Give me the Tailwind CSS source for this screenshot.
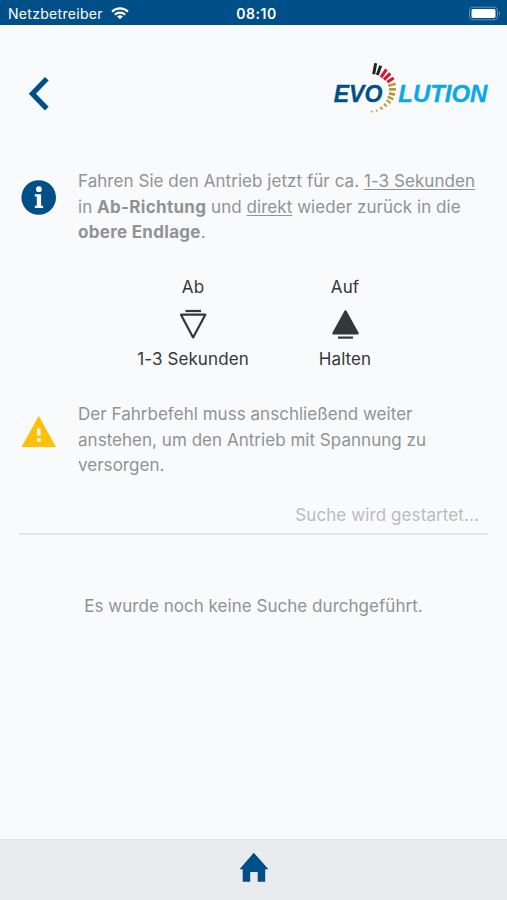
<!DOCTYPE html>
<html lang="de">

<head>
    <meta charset="UTF-8">
    <meta name="viewport" content="width=device-width, initial-scale=1">
    <title>Evolution</title>
    <script src="https://cdn.jsdelivr.net/npm/@tailwindcss/browser@4"></script>
</head>

<body class="bg-[#f9fafc] font-['Inter','Liberation_Sans',sans-serif] text-[#8f9396] w-[507px] h-[900px] flex flex-col overflow-hidden">
    <!-- Status bar -->
    <div class="h-[25px] shrink-0 bg-[#004f88] text-white grid grid-cols-3 items-center pt-[2px]">
        <div class="flex items-center pl-2">
            <span class="text-[14px] tracking-[0.3px] leading-none">Netzbetreiber</span>
            <svg class="ml-2 w-[18px] h-[13px]" viewBox="0 0 18 13" fill="none" stroke="currentColor" stroke-width="2.1">
                <path d="M1 4.7a11.3 11.3 0 0 1 16 0" />
                <path d="M3.8 7.8a7.4 7.4 0 0 1 10.4 0" />
                <path d="M9 12.2 6.1 9.6a4.3 4.3 0 0 1 5.8 0z" fill="currentColor" stroke="none" />
            </svg>
        </div>
        <span class="text-center text-[14px] font-semibold tracking-[0.5px] leading-none pl-[6px]">08:10</span>
        <svg class="justify-self-end mr-[6px] -mt-px w-[33px] h-[15px]" viewBox="0 0 33 15">
            <rect x="1.5" y="1.2" width="28" height="12.6" rx="3.5" fill="none" stroke="#5f90b5" />
            <rect x="3.5" y="3" width="24" height="9" rx="1.8" fill="#fff" />
            <path d="M31 5.5q1.6 2 0 4z" fill="#7fa7c4" />
        </svg>
    </div>

    <!-- Header -->
    <header class="h-[100px] shrink-0 flex justify-between pt-[25px]">
        <svg class="ml-7 mt-[26px] w-[22px] h-[36px]" viewBox="0 0 22 36" fill="none" stroke="#004f88" stroke-width="5.2">
            <path d="M18.8 2.8 4.4 17.7l14.4 14.9" />
        </svg>
        <svg class="w-[182px] h-[75px]" viewBox="0 0 546 225">
            <g font-family="Liberation Sans, Arial, sans-serif" font-weight="700" font-style="italic" font-size="72">
                <text x="26" y="155" textLength="146" lengthAdjust="spacingAndGlyphs" fill="#004f88" stroke="#004f88" stroke-width="1">EVO</text>
                <text x="220" y="155" textLength="267" lengthAdjust="spacingAndGlyphs" fill="#08a9e6" stroke="#08a9e6" stroke-width="1">LUTION</text>
            </g>
            <g fill="none" stroke-width="9">
                <path stroke="#222" d="M152 40l-6 33M167 47l-10 28" />
                <path stroke="#d9142b" d="M184 58l-16 24M196 70l-19 19M206 84l-19 12" />
                <path stroke="#b99b35" stroke-width="8" d="M212 101l-22 6M213 118h-21M210 134l-18-4M205 148l-17-8" />
                <path stroke="#b99b35" stroke-width="6" d="M197 160l-12-10M185 170l-8-9M172 178l-6-7" />
                <path stroke="#c8ae58" stroke-width="5" d="M157 185l-3-6M141 187l-2-5" />
            </g>
        </svg>
    </header>

    <main class="grow text-[17px]">
        <section class="flex pl-[21px] pt-[43px]">
            <svg class="w-[36px] h-[36px] mt-[12px] shrink-0" viewBox="0 0 36 36">
                <circle cx="17.7" cy="17.5" r="17.3" fill="#004f88" />
                <circle cx="17.9" cy="9.2" r="2.9" fill="#fff" />
                <path d="M13.8 14.3h6.3v11.4h2v2.2h-8.3v-2.2h2v-9.2h-2z" fill="#fff" />
            </svg>
            <p class="ml-[21px] pt-px leading-[25.5px] tracking-[0.05px] whitespace-nowrap">
                Fahren Sie den Antrieb jetzt für ca. <u class="underline-offset-2">1-3 Sekunden</u><br>
                in <b class="tracking-[0.3px]">Ab-Richtung</b> und <u class="underline-offset-2">direkt</u> wieder zurück in die<br>
                <b class="tracking-[0.3px]">obere Endlage</b>.
            </p>
        </section>

        <section class="flex pl-[117px] pt-[29.5px] text-[#33383b] leading-[25px] tracking-[0.1px]">
            <div class="w-[152px] flex flex-col items-center">
                <span>Ab</span>
                <svg class="w-[30px] h-[32px] mt-[7px] mb-[8px]" viewBox="0 0 30 32" fill="none" stroke="#33383b" stroke-width="2.2" stroke-linejoin="round">
                    <path d="M7.5 4h15.5" />
                    <path d="M3 7.7h24.3L15.1 30.4z" />
                </svg>
                <span>1-3 Sekunden</span>
            </div>
            <div class="w-[152px] flex flex-col items-center">
                <span>Auf</span>
                <svg class="w-[30px] h-[32px] mt-[7px] mb-[8px]" viewBox="0 0 30 32" fill="#33383b" stroke="#33383b" stroke-width="2.5" stroke-linejoin="round">
                    <path d="M3.5 26.3h24L15.5 4.5z" />
                    <path d="M8 30.6h15" stroke-width="2.2" />
                </svg>
                <span>Halten</span>
            </div>
        </section>

        <section class="flex pl-[21px] pt-[30px]">
            <svg class="w-[36px] h-[32px] mt-[13px] shrink-0" viewBox="0 0 36 32">
                <path d="M17.7.8 35 32H.5z" fill="#ffc107" />
                <path d="M16 13.5h3.5v7H16zM16 23.3h3.5v3.500H16z" fill="#fff" />
            </svg>
            <p class="ml-[21px] leading-[25.5px] tracking-[0.03px] whitespace-nowrap">
                Der Fahrbefehl muss anschließend weiter<br>
                anstehen, um den Antrieb mit Spannung zu<br>
                versorgen.
            </p>
        </section>

        <div class="mx-[19px] mt-[23.5px] h-[33px] pr-[9px] border-b-2 border-[#e4e6e8] text-right leading-[27px] tracking-[0.1px] text-[#b9bcbf]">Suche wird gestartet...</div>
        <p class="mt-[58px] text-center leading-[26px] tracking-[0.03px]">Es wurde noch keine Suche durchgeführt.</p>
    </main>

    <!-- Tab bar -->
    <nav class="h-[61px] shrink-0 bg-[#e9ebee] border-t border-[#e1e3e6] flex justify-center">
        <svg class="w-[30px] h-[31px] mt-[12px]" viewBox="0 0 30 31" fill="#004f88">
            <path d="M14.8.8 29.5 17.3h-3.3v12.5h-7.5V20h-7.5v9.8H3.7V17.3H.5z" />
        </svg>
    </nav>
</body>

</html>
